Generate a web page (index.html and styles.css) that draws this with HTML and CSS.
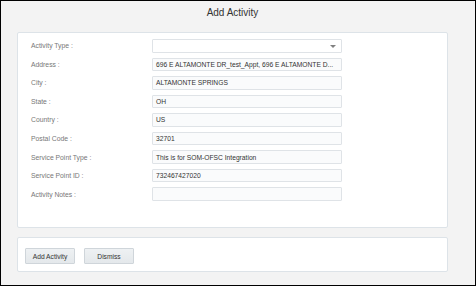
FILE: index.html
```html
<!DOCTYPE html>
<html>
<head>
<meta charset="utf-8">
<link rel="stylesheet" href="styles.css">
</head>
<body>
<div class="frame">
  <div class="title">Add Activity</div>
  <div class="panel form-panel">
    <div class="form-grid">
      <div class="label">Activity Type :</div>
      <div class="field select"><span class="caret"></span></div>
      <div class="label">Address :</div>
      <div class="field">696 E ALTAMONTE DR_test_Appt, 696 E ALTAMONTE D...</div>
      <div class="label">City :</div>
      <div class="field">ALTAMONTE SPRINGS</div>
      <div class="label">State :</div>
      <div class="field">OH</div>
      <div class="label">Country :</div>
      <div class="field">US</div>
      <div class="label">Postal Code :</div>
      <div class="field">32701</div>
      <div class="label">Service Point Type :</div>
      <div class="field">This is for SOM-OFSC Integration</div>
      <div class="label">Service Point ID :</div>
      <div class="field">732467427020</div>
      <div class="label">Activity Notes :</div>
      <div class="field"></div>
    </div>
  </div>
  <div class="panel button-panel">
    <div class="btn">Add Activity</div>
    <div class="btn">Dismiss</div>
  </div>
</div>
</body>
</html>
```
FILE: styles.css
```css
html, body {
  margin: 0;
  padding: 0;
}
body {
  width: 476px;
  height: 286px;
  font-family: "Liberation Sans", Arial, sans-serif;
}
.frame {
  box-sizing: border-box;
  width: 476px;
  height: 286px;
  border: 1px solid #000;
  background: #f3f3f3;
  padding: 0 27px 0 16px;
  display: flex;
  flex-direction: column;
}
.title {
  height: 31px;
  box-sizing: border-box;
  padding-top: 6px;
  text-align: center;
  font-size: 10px;
  line-height: 12px;
  color: #333;
}
.panel {
  background: #fff;
  border: 1px solid #dde3e8;
  border-radius: 2px;
  box-sizing: border-box;
}
.form-panel {
  height: 196px;
  padding: 6px 13px 0 13px;
}
.form-grid {
  display: grid;
  grid-template-columns: 121px 190px;
  grid-auto-rows: 13.5px;
  row-gap: 5.06px;
}
.label {
  font-size: 6.8px;
  color: #777;
  display: flex;
  align-items: center;
  white-space: nowrap;
}
.field {
  box-sizing: border-box;
  border: 1px solid #dfe3e7;
  background: #fafbfc;
  border-radius: 1px;
  font-size: 6.7px;
  color: #333;
  padding-left: 3px;
  display: flex;
  align-items: center;
  white-space: nowrap;
  overflow: hidden;
  position: relative;
}
.select {
  background: #fff;
}
.caret {
  position: absolute;
  right: 5px;
  top: 5px;
  width: 0;
  height: 0;
  border-left: 3px solid transparent;
  border-right: 3px solid transparent;
  border-top: 3px solid #808080;
}
.button-panel {
  margin-top: 9px;
  height: 35px;
  padding: 10px 7px 0 7px;
  display: flex;
  gap: 9px;
  align-items: flex-start;
}
.btn {
  box-sizing: border-box;
  width: 50px;
  height: 16px;
  border: 1px solid #cfd5da;
  background: linear-gradient(#eef1f3, #e4e8eb);
  border-radius: 1px;
  font-size: 6.7px;
  color: #333;
  display: flex;
  align-items: center;
  justify-content: center;
}
```
